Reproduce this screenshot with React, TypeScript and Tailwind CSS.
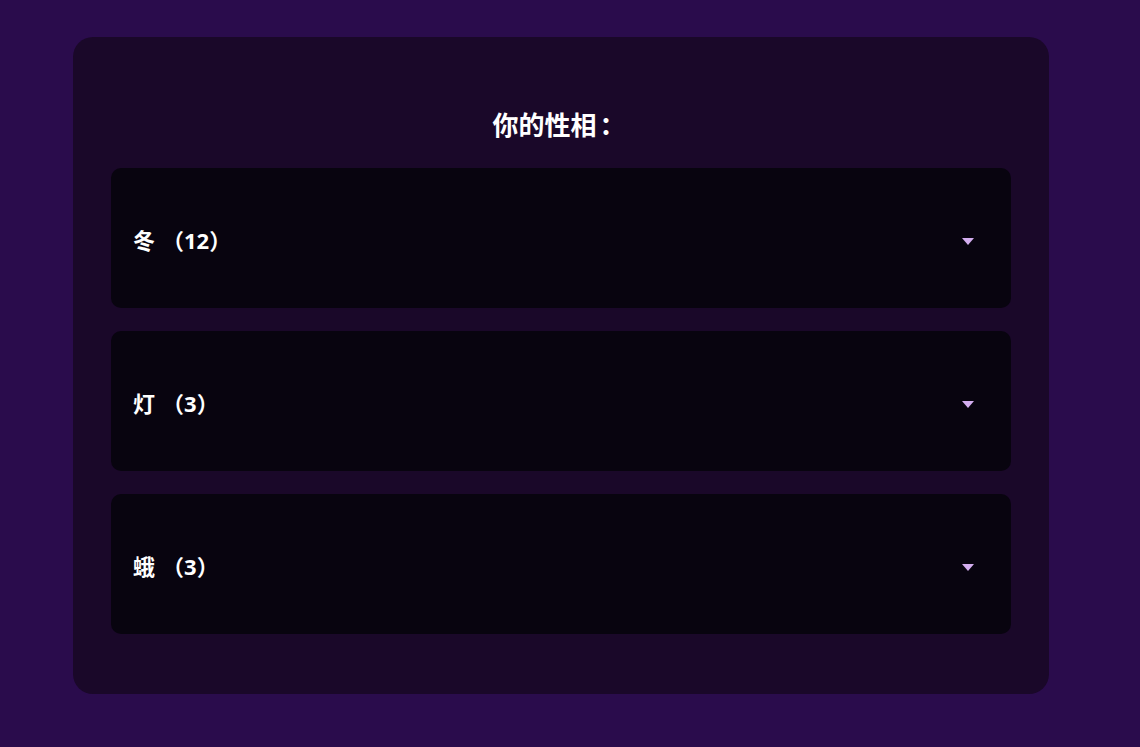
import React from "react";

const items = [
  { name: "冬", count: "12" },
  { name: "灯", count: "3" },
  { name: "蛾", count: "3" },
];

export default function App() {
  return (
    <div className="min-h-[747px] w-full bg-[#2a0c4c] pt-[37px] pb-[53px] font-['Noto_Sans','Noto_Sans_CJK_SC',sans-serif]">
      <div className="ml-[73px] w-[976px] rounded-[20px] bg-[#1a0829] px-[38px] pt-[66px] pb-[60px]">
        <h2 className="mb-[23px] pr-[4px] text-center text-[26px] font-bold leading-[42px] text-white font-['Noto_Sans_CJK_SC',sans-serif]">
          你的性相<span className="ml-[3px]">：</span>
        </h2>
        <div className="flex flex-col gap-[23px]">
          {items.map((t) => (
            <div
              key={t.name}
              className="flex h-[140px] items-center justify-between rounded-[10px] bg-[#08040f] pl-[22px] pr-[37px]"
            >
              <span className="pt-[2px] text-[22px] font-bold leading-[30px] text-white">
                <span className="font-['Noto_Sans_CJK_SC',sans-serif]">{t.name}</span>
                <span className="ml-[7px] font-['Noto_Sans_CJK_SC',sans-serif]">（</span>
                {t.count}
                <span className="font-['Noto_Sans_CJK_SC',sans-serif]">）</span>
              </span>
              <svg width="12" height="7" viewBox="0 0 12 7" className="mt-[6px]">
                <polygon points="0,0 12,0 6,7" fill="#d4aef0" />
              </svg>
            </div>
          ))}
        </div>
      </div>
    </div>
  );
}
